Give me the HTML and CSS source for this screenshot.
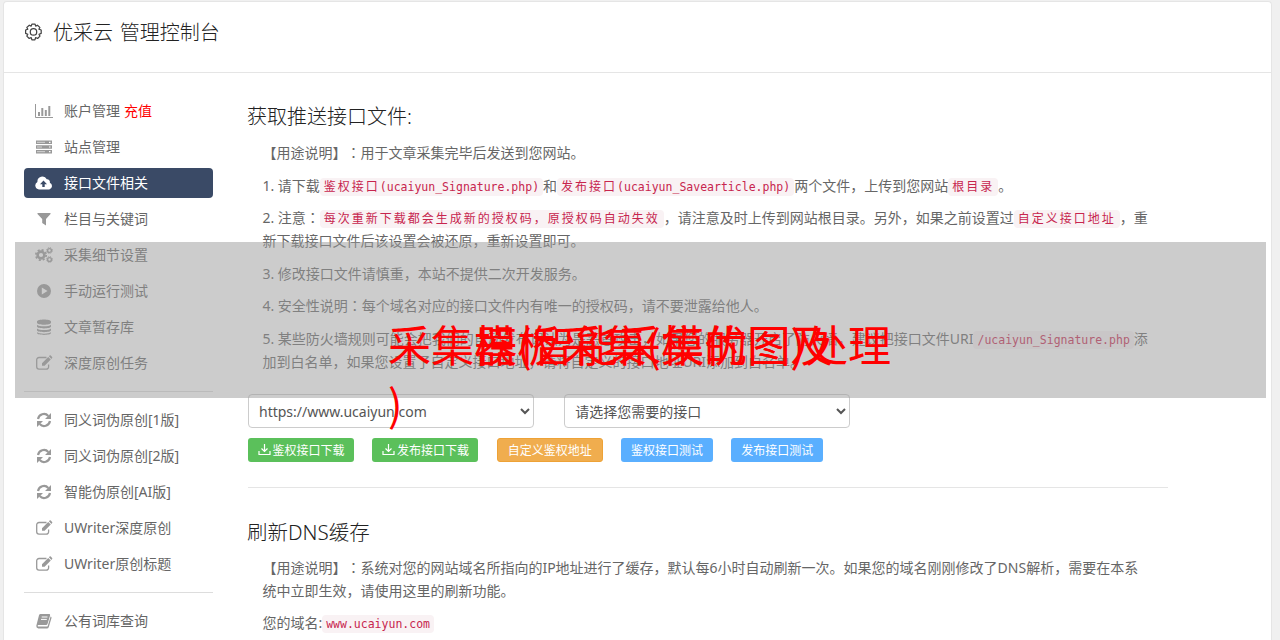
FILE: index.html
```
<!DOCTYPE html>
<html lang="zh-CN">
<head>
    <meta charset="UTF-8">
    <meta name="viewport" content="width=device-width, initial-scale=1.0">
    <title>优采云 管理控制台</title>
    <link rel="stylesheet" href="styles.css">
</head>
<body>

<!-- icons shared by several menu items -->
<svg class="symbols" width="0" height="0">
    <symbol id="i-refresh" viewBox="0 0 18 16">
        <path d="M3 7a6 6 0 0 1 10.3-3.1M15 9A6 6 0 0 1 4.700 12.100" fill="none" stroke="currentColor" stroke-width="2.200"/>
        <path d="M16 1v6h-6zM2 15V9h6z" fill="currentColor"/>
    </symbol>
    <symbol id="i-edit" viewBox="0 0 18 16">
        <path d="M11.500 2.500H4A2.300 2.300 0 0 0 1.700 4.800v7A2.300 2.300 0 0 0 4 14.100h7.300a2.300 2.300 0 0 0 2.300-2.300V9.500" fill="none" stroke="currentColor" stroke-width="1.300"/>
        <path d="M7 8.200 13.200 2l2.600 2.600-6.200 6.200H7zM13.900 1.300l.7-.7q.6-.5 1.200 0l1.300 1.300q.6.600 0 1.200l-.7.800z" fill="currentColor"/>
    </symbol>
    <symbol id="i-download" viewBox="0 0 13 13">
        <path d="M6.500 1v7.500M3.500 5.500l3 3 3-3M1 8v3.500h11V8" fill="none" stroke="currentColor" stroke-width="1.200"/>
    </symbol>
</svg>

<div class="panel">
    <header class="panel-header">
        <svg class="gear" viewBox="0 0 20 20" fill="none" stroke="currentColor" stroke-width="1.300">
            <path d="M8.300 1.300h3.400l.6 2 1.800-1 2.600 2.300-1 1.900 2.400.9v3.600l-2.300.9 1 1.900-2.500 2.500-2-1-.8 2.400H8.300l-.8-2.400-2 1L3 13.800l1-1.900-2.300-.9V7.400L4 6.500 3 4.600l2.600-2.300 1.900 1z" stroke-linejoin="round"/>
            <circle cx="10" cy="9.400" r="3.400"/>
        </svg>
        <h1>优采云 管理控制台</h1>
    </header>

    <div class="panel-body">
        <nav class="sidebar">
            <ul class="menu">
                <li><a href="#">
                    <svg class="icon" viewBox="0 0 18 16"><path d="M.5 1v13.500H18" fill="none" stroke="currentColor"/><path d="M3 9h2v4H3zM6.300 5h2v8h-2zM9.800 7h2v6h-2zM13.300 3h2v10h-2z" fill="currentColor"/></svg>
                    账户管理 <span class="recharge">充值</span>
                </a></li>
                <li><a href="#">
                    <svg class="icon" viewBox="0 0 18 16"><path d="M1 1.500h16v3.600H1zM1 6.200h16v3.600H1zM1 10.900h16v3.600H1z" fill="currentColor"/><path d="M2 3.300h8M2 8h5M2 12.700h8" stroke="#ddd" stroke-width=".9"/><path d="M14 3.300h1.500M14 8h1.500M14 12.700h1.500" stroke="#fff" stroke-width="1.200"/></svg>
                    站点管理
                </a></li>
                <li class="active"><a href="#">
                    <svg class="icon" viewBox="0 0 18 16"><path d="M4 14.500a4 4 0 0 1-1.600-7.500A5 5 0 0 1 11.800 4.300a2.700 2.700 0 0 1 3 3.400A3.600 3.600 0 0 1 14.300 14.500z" fill="currentColor"/><path d="M8.500 5.500 12 9.200H9.700V12H7.300V9.200H5z" fill="#3a4a66"/></svg>
                    接口文件相关
                </a></li>
                <li><a href="#">
                    <svg class="icon" viewBox="0 0 18 16"><path d="M2.500 2h13v1L11 8v6.500L7.200 12V8L2.500 3z" fill="currentColor"/></svg>
                    栏目与关键词
                </a></li>
                <li><a href="#">
                    <svg class="icon" viewBox="0 0 18 16"><g fill="none" stroke="currentColor"><circle cx="6" cy="8" r="3.400" stroke-width="2.600"/><circle cx="6" cy="8" r="5.200" stroke-width="1.700" stroke-dasharray="2.080 2.004"/><circle cx="14.500" cy="3.500" r="1.900" stroke-width="1.400"/><circle cx="14.500" cy="3.500" r="2.900" stroke-dasharray="1.200 1.078"/><circle cx="14.500" cy="12.500" r="1.900" stroke-width="1.400"/><circle cx="14.500" cy="12.500" r="2.900" stroke-dasharray="1.200 1.078"/></g></svg>
                    采集细节设置
                </a></li>
                <li><a href="#">
                    <svg class="icon" viewBox="0 0 18 16"><path fill-rule="evenodd" d="M9 1a7 7 0 1 1 0 14A7 7 0 0 1 9 1zM6.800 4.500v7L12.500 8z" fill="currentColor"/></svg>
                    手动运行测试
                </a></li>
                <li><a href="#">
                    <svg class="icon" viewBox="0 0 18 16"><path d="M2 2.500C2-.3 16-.3 16 2.500v1.200C16 6.300 2 6.300 2 3.700zM2 5.700c2 2 12 2 14 0v1.800c0 2.500-14 2.500-14 0zM2 9.500c2 2 12 2 14 0v1.800c0 2.500-14 2.500-14 0zM2 13.200c2 1.900 12 1.900 14 0v.9c0 2.500-14 2.500-14 0z" fill="currentColor"/></svg>
                    文章暂存库
                </a></li>
                <li><a href="#"><svg class="icon"><use href="#i-edit"/></svg>深度原创任务</a></li>
            </ul>
            <hr>
            <ul class="menu">
                <li><a href="#"><svg class="icon"><use href="#i-refresh"/></svg>同义词伪原创[1版]</a></li>
                <li><a href="#"><svg class="icon"><use href="#i-refresh"/></svg>同义词伪原创[2版]</a></li>
                <li><a href="#"><svg class="icon"><use href="#i-refresh"/></svg>智能伪原创[AI版]</a></li>
                <li><a href="#"><svg class="icon"><use href="#i-edit"/></svg>UWriter深度原创</a></li>
                <li><a href="#"><svg class="icon"><use href="#i-edit"/></svg>UWriter原创标题</a></li>
            </ul>
            <hr>
            <ul class="menu">
                <li><a href="#">
                    <svg class="icon" viewBox="0 0 18 16"><path d="M5.500 1H14q1.500 0 1.100 1.400l-2.600 8.700q-.3 1-1.400 1H3.500q-1 0-.8 1 .1.500.9.500h8.300q.6 0 .8-.6l2.900-9.500q1.200.4.900 1.400l-2.700 9q-.4 1.500-2 1.500H3.300q-2.300-.2-2-2.600L4 2.200Q4.400 1 5.500 1z" fill="currentColor"/><path d="M6.700 4h5.800M6 6.400h5.800" stroke="#fff"/></svg>
                    公有词库查询
                </a></li>
            </ul>
        </nav>

        <main class="content">
            <section>
                <h2>获取推送接口文件:</h2>
                <div class="notes">
                    <p>【用途说明】<span class="colon" lang="zh-TW">：</span>用于文章采集完毕后发送到您网站。</p>
                    <p>1. 请下载<code><span class="cn">鉴权接口</span>(ucaiyun_Signature.php)</code>和<code><span class="cn">发布接口</span>(ucaiyun_Savearticle.php)</code>两个文件，上传到您网站<code><span class="cn">根目录</span></code>。</p>
                    <p>2. 注意<span class="colon" lang="zh-TW">：</span><code><span class="cn">每次重新下载都会生成新的授权码，原授权码自动失效</span></code><span class="comma">，</span>请注意及时上传到网站根目录。另外，如果之前设置过<code><span class="cn">自定义接口地址</span></code><span class="comma">，</span>重<br>新下载接口文件后该设置会被还原，重新设置即可。</p>
                    <p>3. 修改接口文件请慎重，本站不提供二次开发服务。</p>
                    <p>4. 安全性说明<span class="colon" lang="zh-TW">：</span>每个域名对应的接口文件内有唯一的授权码，请不要泄露给他人。</p>
                    <p>5. 某些防火墙规则可能会把我们的自动发布误认为是恶意攻击，如果您的服务器开启了防火墙，建议把接口文件URI<code>/ucaiyun_Signature.php</code>添<br>加到白名单，如果您设置了自定义接口地址，请将自定义的接口地址URI添加到白名单。</p>
                </div>
                <div class="selects">
                    <select>
                        <option>https://www.ucaiyun.com</option>
                    </select>
                    <select>
                        <option>请选择您需要的接口</option>
                    </select>
                </div>
                <div class="buttons">
                    <button class="btn success"><svg><use href="#i-download"/></svg>鉴权接口下载</button>
                    <button class="btn success"><svg><use href="#i-download"/></svg>发布接口下载</button>
                    <button class="btn warning">自定义鉴权地址</button>
                    <button class="btn info">鉴权接口测试</button>
                    <button class="btn info">发布接口测试</button>
                </div>
            </section>
            <section class="dns">
                <h2>刷新DNS缓存</h2>
                <div class="notes">
                    <p>【用途说明】<span class="colon" lang="zh-TW">：</span>系统对您的网站域名所指向的IP地址进行了缓存，默认每6小时自动刷新一次。如果您的域名刚刚修改了DNS解析，需要在本系<br>统中立即生效，请使用这里的刷新功能。</p>
                    <p>您的域名:<code>www.ucaiyun.com</code></p>
                </div>
            </section>
        </main>
    </div>
</div>

<!-- title banner over the console -->
<div class="banner">
    <div class="caption caption-first">采集器(智能采集优图)处理</div>
    <div class="caption caption-second">模板采集(模的图及</div>
    <div class="caption caption-third">)</div>
</div>

</body>
</html>
```
FILE: styles.css
```
* {
    box-sizing: border-box;
}

body {
    margin: 0;
    padding: 1px 8px 0 3px;
    height: 640px;
    overflow: hidden;
    position: relative;
    background-color: #f0f0f0;
    color: #666;
    font-family: "Noto Sans", "Noto Sans CJK SC", sans-serif;
    font-size: 14px;
    text-spacing-trim: space-all;
}

.symbols {
    position: absolute;
}

.panel {
    width: 1269px;
    height: 639px;
    overflow: hidden;
    background-color: #fff;
    border: 1px solid #e5e5e5;
    border-bottom: 0;
    border-radius: 4px 4px 0 0;
}

.panel-header {
    display: flex;
    align-items: flex-start;
    height: 71px;
    padding: 16px 20px 0 21px;
    border-bottom: 1px solid #e5e5e5;
}

.gear {
    width: 19px;
    height: 19px;
    margin: 5px 10px 0 -1px;
    color: #444;
}

h1, h2 {
    margin: 0;
    font-size: 20px;
    font-weight: 300;
    line-height: 30px;
    color: #222;
    white-space: nowrap;
}

h1 {
    word-spacing: 1.500px;
}

h2 {
    margin-left: -1px;
    padding-top: 1px;
}

.panel-body {
    display: flex;
    padding: 20px 0 0 20px;
}

/* Sidebar */
.sidebar {
    width: 189px;
}

.menu {
    list-style: none;
    margin: 0;
    padding: 0;
}

.menu li {
    padding: 3px 0;
}

.menu a {
    display: flex;
    align-items: center;
    height: 30px;
    padding: 0 0 2px 11px;
    border-radius: 4px;
    color: #666;
    text-decoration: none;
    white-space: nowrap;
}

.icon {
    flex: none;
    width: 18px;
    height: 16px;
    margin: 2px 11px 0 0;
    color: #999;
}

.menu .active a {
    background-color: #3a4a66;
    color: #fff;
}

.menu .active .icon {
    color: #fff;
}

.recharge {
    color: #f00;
    margin-left: 4px;
}

.sidebar hr {
    margin: 10px 0;
    border: 0;
    border-top: 1px solid #ddd;
}

/* Content */
.content {
    width: 920px;
    margin-left: 35px;
    padding-top: 8px;
}

.notes {
    padding: 9px 0 0 14.400px;
}

.notes p {
    margin: 0 0 9.500px;
    line-height: 23px;
    white-space: nowrap;
}

.colon, .comma {
    font-family: "Noto Sans CJK TC", sans-serif;
    line-height: 1;
}

.comma {
    font-family: "Noto Sans CJK SC", sans-serif;
}

code {
    padding: 2px 4px;
    font-family: "DejaVu Sans Mono", monospace;
    font-size: 11.500px;
    line-height: 1;
    color: #c7254e;
    background-color: #f9f2f4;
    border-radius: 4px;
}

.cn {
    font-family: "Noto Sans CJK SC", sans-serif;
    font-size: 12px;
    letter-spacing: 2px;
}

.selects {
    display: flex;
    gap: 30px;
    margin-top: 21px;
}

select {
    width: 286.200px;
    height: 34px;
    padding: 6px;
    border: 1px solid #ccc;
    border-radius: 4px;
    background-color: #fff;
    color: #555;
    font-family: inherit;
    font-size: 14px;
}

.buttons {
    display: flex;
    gap: 18.300px;
    margin-top: 10px;
    padding-bottom: 25px;
    border-bottom: 1px solid #e5e5e5;
}

.btn {
    display: flex;
    align-items: center;
    justify-content: center;
    height: 24px;
    padding: 0;
    border: 0;
    border-radius: 3px;
    color: #fff;
    font-family: inherit;
    font-size: 12px;
    white-space: nowrap;
}

.btn svg {
    width: 13px;
    height: 13px;
    margin-right: 2px;
}

.success {
    width: 106.100px;
    background-color: #5bc05b;
}

.warning {
    width: 106px;
    background-color: #f0ad4e;
    border: 1px solid #eea236;
}

.info {
    width: 92px;
    background-color: #5aafff;
}

.dns {
    padding-top: 28px;
}

.dns h2 {
    font-size: 20.500px;
}

/* Banner */
.banner {
    position: absolute;
    left: 15px;
    top: 242px;
    width: 1251px;
    height: 156px;
    background-color: rgba(153, 153, 153, .5);
}

.caption {
    position: absolute;
    color: #f00;
    font-family: "Noto Sans CJK SC", sans-serif;
    font-size: 43.100px;
    line-height: 62px;
    white-space: nowrap;
}

.caption-first {
    left: 373px;
    top: 70px;
}

.caption-second {
    left: 459px;
    top: 70px;
}

.caption-third {
    left: 373px;
    top: 129px;
}
```
